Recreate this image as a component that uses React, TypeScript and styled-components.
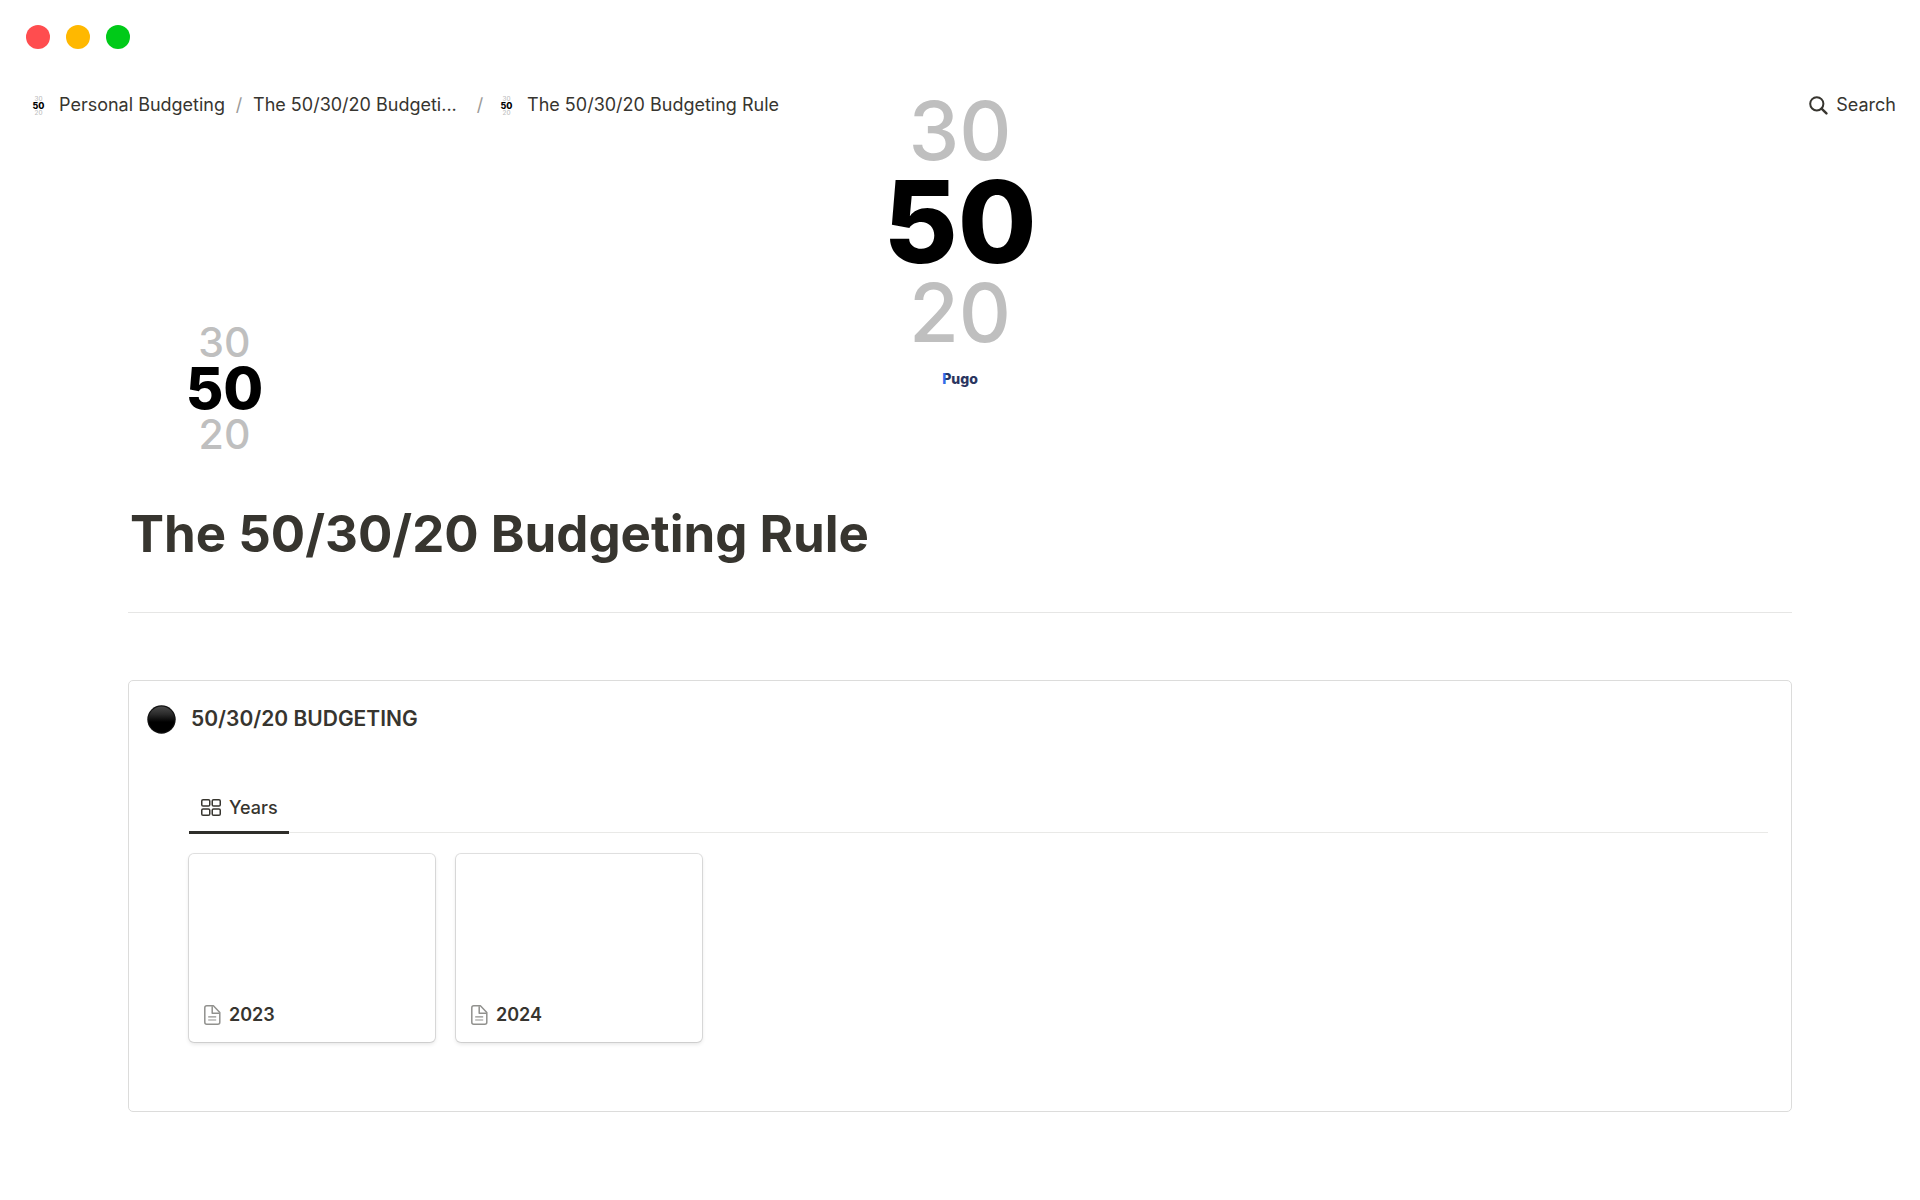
import React from "react";
import styled, { createGlobalStyle } from "styled-components";

const GlobalStyle = createGlobalStyle`
  *, *::before, *::after { box-sizing: border-box; }
  body {
    margin: 0;
    background: #fff;
    color: #37352f;
    font-family: Inter, "Liberation Sans", sans-serif;
    font-size: 18px;
    line-height: 24px;
  }
`;

const WindowBar = styled.div`
  display: flex;
  align-items: center;
  gap: 16px;
  height: 74px;
  padding: 0 26px;
`;

const Light = styled.button<{ $color: string }>`
  width: 24px;
  height: 24px;
  padding: 0;
  border: 0;
  border-radius: 50%;
  background: ${(p) => p.$color};
`;

const Cover = styled.header`
  position: relative;
  display: flex;
  flex-direction: column;
  align-items: center;
  height: 316px;
  padding-top: 25px;
`;

const TopBar = styled.div`
  position: absolute;
  top: 19px;
  left: 0;
  right: 0;
  display: flex;
  align-items: center;
  justify-content: space-between;
  padding: 0 24px 0 26px;
`;

const Crumbs = styled.nav`
  display: flex;
  align-items: center;
  white-space: nowrap;
`;

const Crumb = styled.a<{ $width?: number }>`
  display: flex;
  align-items: center;
  gap: 9px;
  width: ${(p) => (p.$width ? `${p.$width}px` : "auto")};
  color: inherit;
  text-decoration: none;
`;

const CrumbIcon = styled.span`
  display: flex;
  justify-content: center;
  width: 24px;
`;

const Slash = styled.span`
  width: 28px;
  text-align: center;
  color: #9b9a97;
`;

const SearchButton = styled.button`
  display: flex;
  align-items: center;
  gap: 8px;
  padding: 0;
  border: 0;
  background: none;
  color: inherit;
  font: inherit;
`;

const PugoMark = styled.svg`
  display: block;
  margin-top: 26px;
`;

const Page = styled.main`
  padding: 0 128px 88px;
`;

const PageIcon = styled.div`
  margin: -64px 0 0 61px;
  position: relative;
`;

const Title = styled.h1`
  margin: 50px 0 0;
  padding: 0 2px;
  font-size: 51px;
  line-height: 68px;
  font-weight: 700;
`;

const Divider = styled.hr`
  height: 1px;
  margin: 44px 0 67px;
  border: 0;
  background: #e6e6e5;
`;

const Callout = styled.section`
  padding: 20px 23px 69px 18px;
  border: 1px solid #dcdcdb;
  border-radius: 5px;
`;

const CalloutHead = styled.div`
  display: flex;
  align-items: center;
  gap: 15px;
  height: 36px;
`;

const CalloutTitle = styled.h2`
  margin: 0;
  font-size: 21px;
  line-height: 28px;
  font-weight: 600;
`;

const Board = styled.div`
  margin: 47px 0 0 42px;
`;

const Tabs = styled.div`
  display: flex;
  border-bottom: 1px solid #e9e9e7;
`;

const Tab = styled.button`
  display: flex;
  align-items: flex-start;
  gap: 8px;
  height: 50px;
  margin-bottom: -2px;
  padding: 12px 11px 0 12px;
  border: 0;
  border-bottom: 3px solid #2f2e2a;
  background: none;
  color: inherit;
  font: inherit;
  font-weight: 500;

  svg {
    margin-top: 3px;
  }
`;

const Gallery = styled.div`
  display: grid;
  grid-template-columns: repeat(auto-fill, 246px);
  gap: 21px;
  margin-top: 21px;
`;

const Card = styled.a`
  display: flex;
  flex-direction: column;
  height: 188px;
  border-radius: 5px;
  box-shadow: 0 0 0 1px rgba(15, 15, 15, 0.12), 0 2px 4px rgba(15, 15, 15, 0.12);
  background: #fff;
  color: inherit;
  text-decoration: none;
`;

const CardPreview = styled.div`
  flex: 1;
`;

const CardLabel = styled.div`
  display: flex;
  align-items: center;
  gap: 8px;
  padding: 0 15px 15px;
  font-weight: 600;
`;

function RuleLogo({ width }: { width: number }) {
  return (
    <svg
      width={width}
      height={Math.round((width * 244) / 140)}
      viewBox="0 0 140 244"
      fontFamily="Inter, sans-serif"
      textAnchor="middle"
      style={{ display: "block" }}
      overflow="visible"
      role="img"
      aria-label="50/30/20"
    >
      <text x="70" y="61" fontSize="81" fontWeight="500" fill="#bfbfbf">30</text>
      <text x="70" y="164" fontSize="114" fontWeight="800" fill="#000">50</text>
      <text x="70" y="243" fontSize="81" fontWeight="500" fill="#bfbfbf">20</text>
    </svg>
  );
}

function SearchIcon() {
  return (
    <svg width="19" height="19" viewBox="0 0 19 19" fill="none" stroke="#37352f" strokeWidth="2">
      <circle cx="7.8" cy="7.8" r="6.6" />
      <path d="M12.6 12.6 17.4 17.4" strokeWidth="2.4" strokeLinecap="round" />
    </svg>
  );
}

function GalleryIcon() {
  return (
    <svg width="20" height="17" viewBox="0 0 20 17" fill="none" stroke="#37352f" strokeWidth="1.5">
      <rect x="0.75" y="0.75" width="8" height="6.2" rx="1.3" />
      <rect x="11.25" y="0.75" width="8" height="6.2" rx="1.3" />
      <rect x="0.75" y="10" width="8" height="6.2" rx="1.3" />
      <rect x="11.25" y="10" width="8" height="6.2" rx="1.3" />
    </svg>
  );
}

function PageGlyph() {
  return (
    <svg width="17" height="20" viewBox="0 0 17 20" fill="none" stroke="#91918e" strokeWidth="1.5" strokeLinejoin="round">
      <path d="M2.8.8H9.4L15.8 7.4V17.2Q15.8 19.2 13.8 19.2H2.8Q.8 19.2.8 17.2V2.8Q.8.8 2.8.8Z" />
      <path d="M8.2 1.2V8.2H15.4" />
      <path d="M4.2 11.8H12.2M4.2 15H12.2" strokeWidth="1.2" />
    </svg>
  );
}

function BlackCircle() {
  return (
    <svg width="29" height="29" viewBox="0 0 29 29">
      <defs>
        <linearGradient id="gloss" x1="0" y1="0" x2="0" y2="1">
          <stop offset="0" stopColor="#4a4a4a" />
          <stop offset="0.3" stopColor="#2a2a2a" />
          <stop offset="0.6" stopColor="#000" />
        </linearGradient>
      </defs>
      <circle cx="14.5" cy="14.5" r="14.2" fill="#111" />
      <circle cx="14.5" cy="14.5" r="13" fill="url(#gloss)" />
    </svg>
  );
}

const years = ["2023", "2024"];

export default function App() {
  return (
    <>
      <GlobalStyle />
      <WindowBar>
        <Light $color="#ff4d4f" aria-label="Close" />
        <Light $color="#ffb800" aria-label="Minimize" />
        <Light $color="#00ca18" aria-label="Zoom" />
      </WindowBar>
      <Cover>
        <RuleLogo width={140} />
        <PugoMark width="44" height="24" viewBox="0 0 44 24" role="img" aria-label="Pugo">
          <defs>
            <linearGradient id="pugo" gradientUnits="userSpaceOnUse" x1="2" y1="0" x2="10" y2="0">
              <stop offset="0.3" stopColor="#2f6bea" />
              <stop offset="0.6" stopColor="#2a3560" />
            </linearGradient>
          </defs>
          <text x="22" y="17" textAnchor="middle" fontFamily="Inter, sans-serif" fontSize="16" fontWeight="800" fill="url(#pugo)">
            Pugo
          </text>
        </PugoMark>
        <TopBar>
          <Crumbs aria-label="Breadcrumb">
            <Crumb href="#personal">
              <CrumbIcon>
                <RuleLogo width={11} />
              </CrumbIcon>
              Personal Budgeting
            </Crumb>
            <Slash>/</Slash>
            <Crumb href="#budgeting" $width={213}>The 50/30/20 Budgeti...</Crumb>
            <Slash>/</Slash>
            <Crumb href="#rule">
              <CrumbIcon>
                <RuleLogo width={11} />
              </CrumbIcon>
              The 50/30/20 Budgeting Rule
            </Crumb>
          </Crumbs>
          <SearchButton>
            <SearchIcon />
            Search
          </SearchButton>
        </TopBar>
      </Cover>
      <Page>
        <PageIcon>
          <RuleLogo width={71} />
        </PageIcon>
        <Title>The 50/30/20 Budgeting Rule</Title>
        <Divider />
        <Callout>
          <CalloutHead>
            <BlackCircle />
            <CalloutTitle>50/30/20 BUDGETING</CalloutTitle>
          </CalloutHead>
          <Board>
            <Tabs role="tablist">
              <Tab role="tab" aria-selected="true">
                <GalleryIcon />
                Years
              </Tab>
            </Tabs>
            <Gallery>
              {years.map((year) => (
                <Card key={year} href={`#${year}`}>
                  <CardPreview />
                  <CardLabel>
                    <PageGlyph />
                    {year}
                  </CardLabel>
                </Card>
              ))}
            </Gallery>
          </Board>
        </Callout>
      </Page>
    </>
  );
}
